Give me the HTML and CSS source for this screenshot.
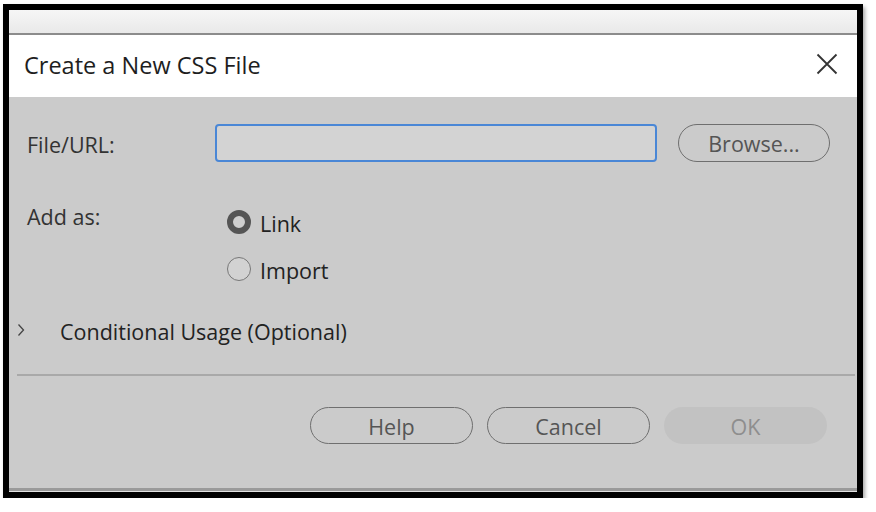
FILE: index.html
```html
<!DOCTYPE html>
<html>
<head>
<meta charset="utf-8">
<link rel="stylesheet" href="styles.css">
</head>
<body>
<div class="frame">
  <div class="topstrip"></div>
  <div class="titlebar">
    <span class="title">Create a New CSS File</span>
    <svg class="close" width="22" height="22" viewBox="0 0 22 22"><path d="M1.5 1.5 L20.5 20.5 M20.5 1.5 L1.5 20.5" stroke="#333" stroke-width="1.8" fill="none"/></svg>
  </div>
  <div class="content">
    <div class="row-file">
      <span class="label">File/URL:</span>
      <div class="input"></div>
      <button class="btn browse">Browse...</button>
    </div>
    <div class="row-add">
      <span class="label">Add as:</span>
      <div class="radios">
        <div class="radio-item"><span class="radio checked"></span><span class="rlabel">Link</span></div>
        <div class="radio-item"><span class="radio"></span><span class="rlabel">Import</span></div>
      </div>
    </div>
    <div class="expander">
      <svg class="chev" width="8" height="14" viewBox="0 0 8 14"><path d="M1.5 1.5 L6.5 7 L1.5 12.5" stroke="#444" stroke-width="1.3" fill="none"/></svg>
      <span class="exp-label">Conditional Usage (Optional)</span>
    </div>
    <div class="sep"></div>
    <div class="actions">
      <button class="btn act">Help</button>
      <button class="btn act">Cancel</button>
      <button class="btn act ok">OK</button>
    </div>
  </div>
  <div class="bottomline"></div>
</div>
</body>
</html>
```
FILE: styles.css
```css
html, body {
  margin: 0;
  padding: 0;
  background: #ffffff;
}
body {
  font-family: "Segoe UI", "Open Sans", "Noto Sans", sans-serif;
  color: #2b2b2b;
}
.frame {
  margin: 4px 0 0 3px;
  width: 848px;
  border: 6px solid #000;
  box-shadow: 2px 3px 4px rgba(0,0,0,0.35);
  display: flex;
  flex-direction: column;
  background: #cbcbcb;
}
.topstrip {
  height: 23px;
  background: linear-gradient(#f6f6f6, #e9e9e9);
  border-bottom: 2px solid #8c8c8c;
}
.titlebar {
  height: 62px;
  background: #fff;
  display: flex;
  align-items: center;
  justify-content: space-between;
  padding: 0 19px 0 15px;
}
.title {
  font-size: 23.5px;
  color: #1e1e1e;
  margin-top: -2px;
}
.close {
  margin-top: -4px;
}
.content {
  height: 391px;
  box-sizing: border-box;
  padding: 27px 0 0 0;
  display: flex;
  flex-direction: column;
}
.label {
  font-size: 21.5px;
  color: #333;
  line-height: 28px;
}
.row-file {
  display: flex;
  align-items: center;
  padding-left: 18px;
  height: 38px;
}
.row-file .label {
  width: 188px;
  margin-top: 4px;
}
.input {
  width: 442px;
  height: 38px;
  box-sizing: border-box;
  border: 2px solid #4a87d6;
  border-radius: 4px;
  background: #d3d3d3;
}
.btn {
  font-family: "Segoe UI", "Open Sans", "Noto Sans", sans-serif;
  font-size: 21.5px;
  color: #555;
  background: transparent;
  border: 1.5px solid #6f6f6f;
  border-radius: 19px;
  height: 38px;
  box-sizing: border-box;
  padding: 2px 0 0 0;
  line-height: 1;
}
.browse {
  width: 152px;
  margin-left: 21px;
}
.row-add {
  display: flex;
  padding-left: 18px;
  margin-top: 41px;
}
.row-add .label {
  width: 200px;
}
.radios {
  display: flex;
  flex-direction: column;
  gap: 19px;
  padding-top: 5px;
}
.radio-item {
  display: flex;
  align-items: center;
  height: 28px;
}
.radio {
  width: 24px;
  height: 24px;
  box-sizing: border-box;
  border-radius: 50%;
  border: 1.5px solid #777;
  background: #d2d2d2;
  margin-right: 9px;
  flex: none;
}
.radio.checked {
  border: 6px solid #555;
  background: #cfcfcf;
}
.rlabel {
  font-size: 21.5px;
  color: #222;
  margin-top: 3px;
}
.expander {
  display: flex;
  align-items: center;
  height: 28px;
  margin-top: 33px;
  padding-left: 8px;
}
.chev {
  margin-right: 35px;
}
.exp-label {
  font-size: 21.5px;
  color: #222;
  margin-top: 2px;
}
.sep {
  height: 2px;
  background: #a9a9a9;
  margin: 30px 2px 0 8px;
}
.actions {
  display: flex;
  gap: 14px;
  margin-top: 31px;
  padding-left: 301px;
}
.act {
  width: 163px;
  height: 37px;
}
.ok {
  border-color: transparent;
  background: #c2c2c2;
  color: #8e8e8e;
}
.bottomline {
  height: 3px;
  background: #9a9a9a;
  border-bottom: 1px solid #e2e2e2;
}
```
